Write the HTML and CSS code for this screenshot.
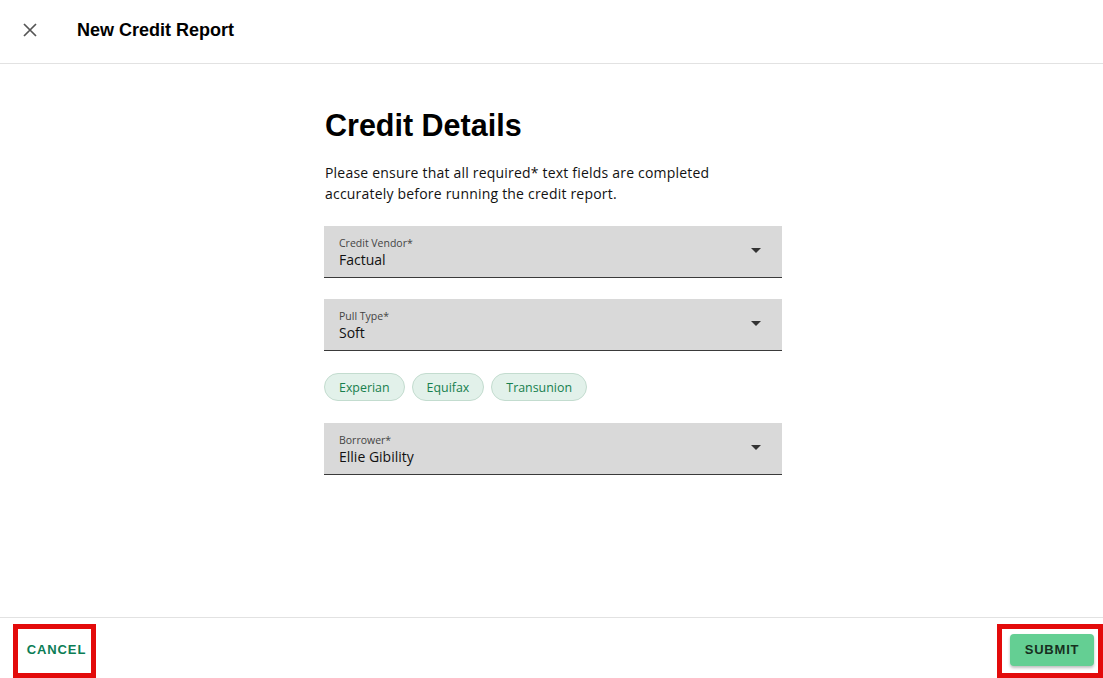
FILE: index.html
```html
<!DOCTYPE html>
<html lang="en">
<head>
<meta charset="utf-8">
<title>New Credit Report</title>
<link rel="stylesheet" href="styles.css">
</head>
<body>
<div class="app">
  <header class="topbar">
    <button class="close-btn" aria-label="Close">
      <svg width="14" height="14" viewBox="0 0 14 14"><path d="M1 1L13 13M13 1L1 13" stroke="#555" stroke-width="1.7" fill="none"/></svg>
    </button>
    <h1 class="topbar-title">New Credit Report</h1>
  </header>
  <main class="content">
    <section class="form">
      <h2 class="form-title">Credit Details</h2>
      <p class="form-desc">Please ensure that all required* text fields are completed accurately before running the credit report.</p>
      <div class="field">
        <div class="field-text">
          <span class="field-label">Credit Vendor*</span>
          <span class="field-value">Factual</span>
        </div>
        <span class="caret"></span>
      </div>
      <div class="field">
        <div class="field-text">
          <span class="field-label">Pull Type*</span>
          <span class="field-value">Soft</span>
        </div>
        <span class="caret"></span>
      </div>
      <div class="chips">
        <span class="chip">Experian</span>
        <span class="chip">Equifax</span>
        <span class="chip">Transunion</span>
      </div>
      <div class="field">
        <div class="field-text">
          <span class="field-label">Borrower*</span>
          <span class="field-value">Ellie Gibility</span>
        </div>
        <span class="caret"></span>
      </div>
    </section>
  </main>
  <footer class="footer">
    <div class="highlight highlight-left"><button class="btn-text">CANCEL</button></div>
    <div class="highlight highlight-right"><button class="btn-primary">SUBMIT</button></div>
  </footer>
</div>
</body>
</html>
```
FILE: styles.css
```css
* { box-sizing: border-box; }
html, body { margin: 0; padding: 0; height: 100%; }
body {
  background: #fff;
  font-family: "Open Sans", "Noto Sans", sans-serif;
  color: #000;
}
.app {
  display: flex;
  flex-direction: column;
  height: 100vh;
}
.topbar {
  height: 64px;
  flex: none;
  display: flex;
  align-items: center;
  border-bottom: 1px solid #e2e2e2;
  padding-left: 16px;
}
.close-btn {
  width: 28px;
  height: 28px;
  border: 0;
  background: none;
  padding: 0;
  display: flex;
  align-items: center;
  justify-content: center;
  margin-right: 33px;
  margin-top: -3px;
}
.topbar-title {
  margin: 0;
  font-family: "Liberation Sans", Arial, sans-serif;
  font-weight: 700;
  font-size: 18px;
  margin-top: -3px;
}
.content {
  flex: 1;
  display: flex;
  justify-content: center;
  padding-left: 3px;
}
.form {
  width: 458px;
  padding-top: 43px;
}
.form-title {
  margin: 0;
  font-family: "Liberation Sans", Arial, sans-serif;
  font-weight: 700;
  font-size: 30.5px;
  line-height: 36px;
  padding-left: 1px;
}
.form-desc {
  margin: 19px 0 0;
  font-size: 14px;
  line-height: 21px;
  letter-spacing: 0.2px;
  width: 420px;
  color: #111;
  padding-left: 1px;
}
.field {
  margin-top: 21px;
  height: 52px;
  background: #d9d9d9;
  border-bottom: 1.5px solid #3a3a3a;
  display: flex;
  align-items: center;
  justify-content: space-between;
  padding: 0 21px 0 15px;
}
.form-desc + .field { margin-top: 22px; }
.field-text {
  display: flex;
  flex-direction: column;
  margin-top: 2px;
}
.field-label {
  font-size: 10.5px;
  line-height: 14px;
  color: #444;
}
.field-value {
  font-size: 14px;
  line-height: 20px;
  color: #111;
}
.caret {
  width: 0;
  height: 0;
  border-left: 5px solid transparent;
  border-right: 5px solid transparent;
  border-top: 5px solid #333;
  margin-top: -3px;
}
.chips {
  display: flex;
  gap: 7px;
  margin-top: 22px;
}
.chips + .field { margin-top: 22px; }
.chip {
  height: 28px;
  padding: 0 14px;
  border-radius: 14px;
  background: #e2f1ea;
  border: 1px solid #c3dccf;
  color: #17804e;
  font-size: 12.4px;
  display: flex;
  align-items: center;
}
.footer {
  flex: none;
  height: 61px;
  border-top: 1px solid #e2e2e2;
  display: flex;
  justify-content: space-between;
  align-items: flex-end;
  padding-left: 13px;
}
.highlight {
  border: 5px solid #e30b0b;
  height: 54px;
  display: flex;
  align-items: center;
  justify-content: center;
}
.highlight-left { width: 83px; padding: 0 0 3px 4px; }
.highlight-right { width: 106px; padding: 0 4px 3px 8px; justify-content: flex-start; }
.btn-text {
  border: 0;
  background: none;
  font-family: "Liberation Sans", Arial, sans-serif;
  font-weight: 700;
  font-size: 13px;
  letter-spacing: 0.9px;
  color: #0b7d55;
  padding: 0;
}
.btn-primary {
  border: 0;
  width: 84px;
  height: 32px;
  border-radius: 4px;
  background: #64cf93;
  box-shadow: 0 2px 3px rgba(0,0,0,0.25);
  font-family: "Liberation Sans", Arial, sans-serif;
  font-weight: 700;
  font-size: 13px;
  letter-spacing: 0.8px;
  color: #17301f;
  padding: 0;
}
```
